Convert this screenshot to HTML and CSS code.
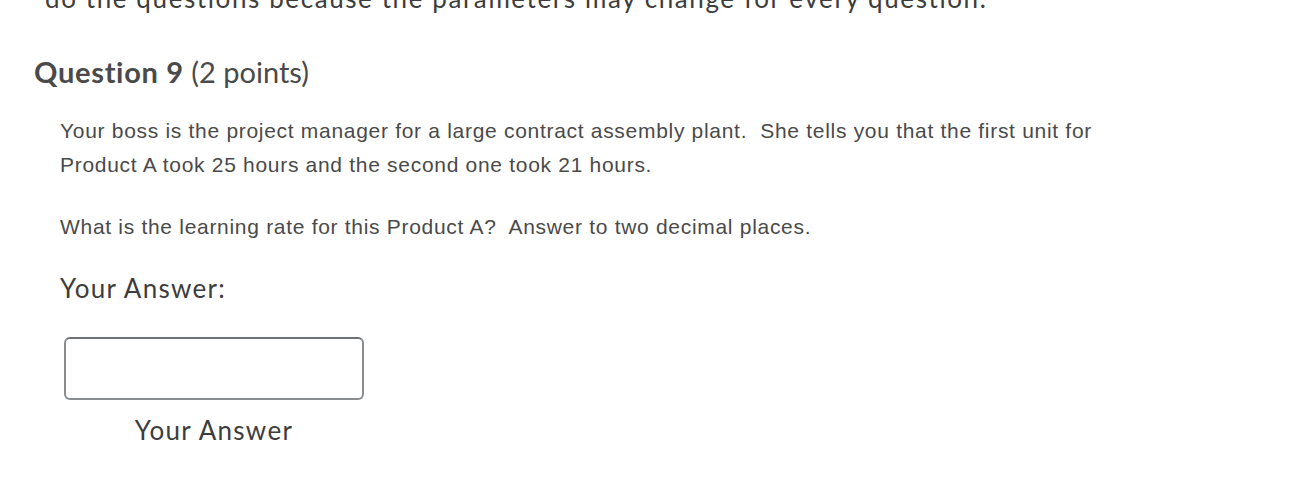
FILE: index.html
```html
<!DOCTYPE html>
<html>
<head>
<meta charset="utf-8">
<link rel="stylesheet" href="styles.css">
</head>
<body>
<div class="page">
  <p class="intro">do the questions because the parameters may change for every question.</p>
  <h2 class="qtitle"><strong>Question 9</strong> (2 points)</h2>
  <div class="qbody">
    <p>Your boss is the project manager for a large contract assembly plant.&nbsp; She tells you that the first unit for Product A took 25 hours and the second one took 21 hours.</p>
    <p>What is the learning rate for this Product A?&nbsp; Answer to two decimal places.</p>
  </div>
  <div class="answer">
    <div class="answer-label">Your Answer:</div>
    <div class="field">
      <input class="input" type="text" aria-label="Your Answer">
      <div class="field-label">Your Answer</div>
    </div>
  </div>
</div>
</body>
</html>
```

FILE: styles.css
```css
html, body {
  margin: 0;
  padding: 0;
  background: #fff;
}
.page {
  font-family: Lato, "Open Sans", sans-serif;
  color: #3d3d3d;
  padding: 0 0 0 34px;
}
.intro {
  margin: -18px 0 0 11px;
  font-size: 26px;
  line-height: 32px;
  letter-spacing: 1.6px;
  white-space: nowrap;
  color: #3d3d3d;
}
.qtitle {
  margin: 41px 0 0 0;
  font-size: 29px;
  font-weight: normal;
  line-height: 34px;
  letter-spacing: 0;
  color: #4a4a4a;
}
.qtitle strong {
  font-weight: bold;
  letter-spacing: 0.7px;
}
.qbody {
  margin: 25px 0 0 26px;
  width: 1060px;
  font-family: "Liberation Sans", Arial, sans-serif;
  font-size: 21px;
  line-height: 34px;
  letter-spacing: 0.7px;
  color: #4a4a4a;
}
.qbody p {
  margin: 0 0 28px 0;
}
.answer {
  margin-left: 26px;
}
.answer-label {
  font-size: 26px;
  line-height: 32px;
  letter-spacing: 1.3px;
  color: #3d3d3d;
  margin-top: 2px;
}
.field {
  display: flex;
  flex-direction: column;
  align-items: center;
  width: 300px;
  margin: 33px 0 0 4px;
}
.input {
  box-sizing: border-box;
  width: 300px;
  height: 63px;
  border: 2px solid #8a8d90;
  border-top-color: #6f7275;
  border-radius: 6px;
  background: #fff;
  margin: 0;
}
.field-label {
  font-size: 26px;
  line-height: 32px;
  letter-spacing: 1.3px;
  margin-top: 14px;
  color: #3d3d3d;
}
```
